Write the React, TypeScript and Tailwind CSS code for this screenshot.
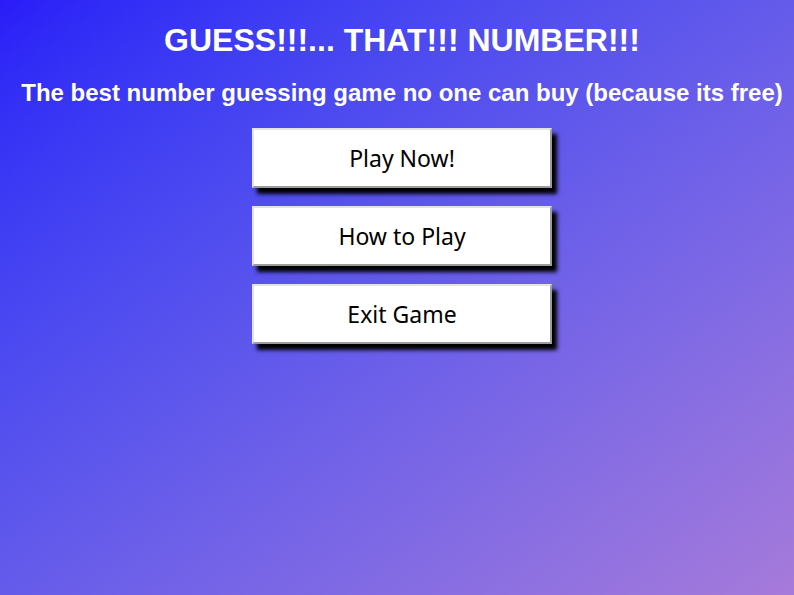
import React from "react"

const buttons = ["Play Now!", "How to Play", "Exit Game"]

export default function App() {
  return (
    <div className="h-[595px] w-[794px] overflow-hidden bg-gradient-to-br from-[#2a1cf8] to-[#a67ada] pl-[10px] font-['Liberation_Sans',Arial,sans-serif] text-white">
      <h1 className="mt-[22px] text-center text-[32px] font-bold leading-[37px]">
        GUESS!!!... THAT!!! NUMBER!!!
      </h1>
      <h2 className="mt-[20px] whitespace-nowrap text-center text-[24px] font-bold leading-[28px]">
        The best number guessing game no one can buy (because its free)
      </h2>
      <div className="mt-[21px] flex flex-col items-center gap-[18px]">
        {buttons.map((label) => (
          <button
            key={label}
            className="h-[60px] w-[300px] border-2 border-t-[#e3e3e3] border-l-[#e3e3e3] border-r-[#9c9c9c] border-b-[#9c9c9c] bg-white font-['Noto_Sans',sans-serif] text-[23px] text-black shadow-[5px_6px_4px_#000]"
          >
            {label}
          </button>
        ))}
      </div>
    </div>
  )
}
